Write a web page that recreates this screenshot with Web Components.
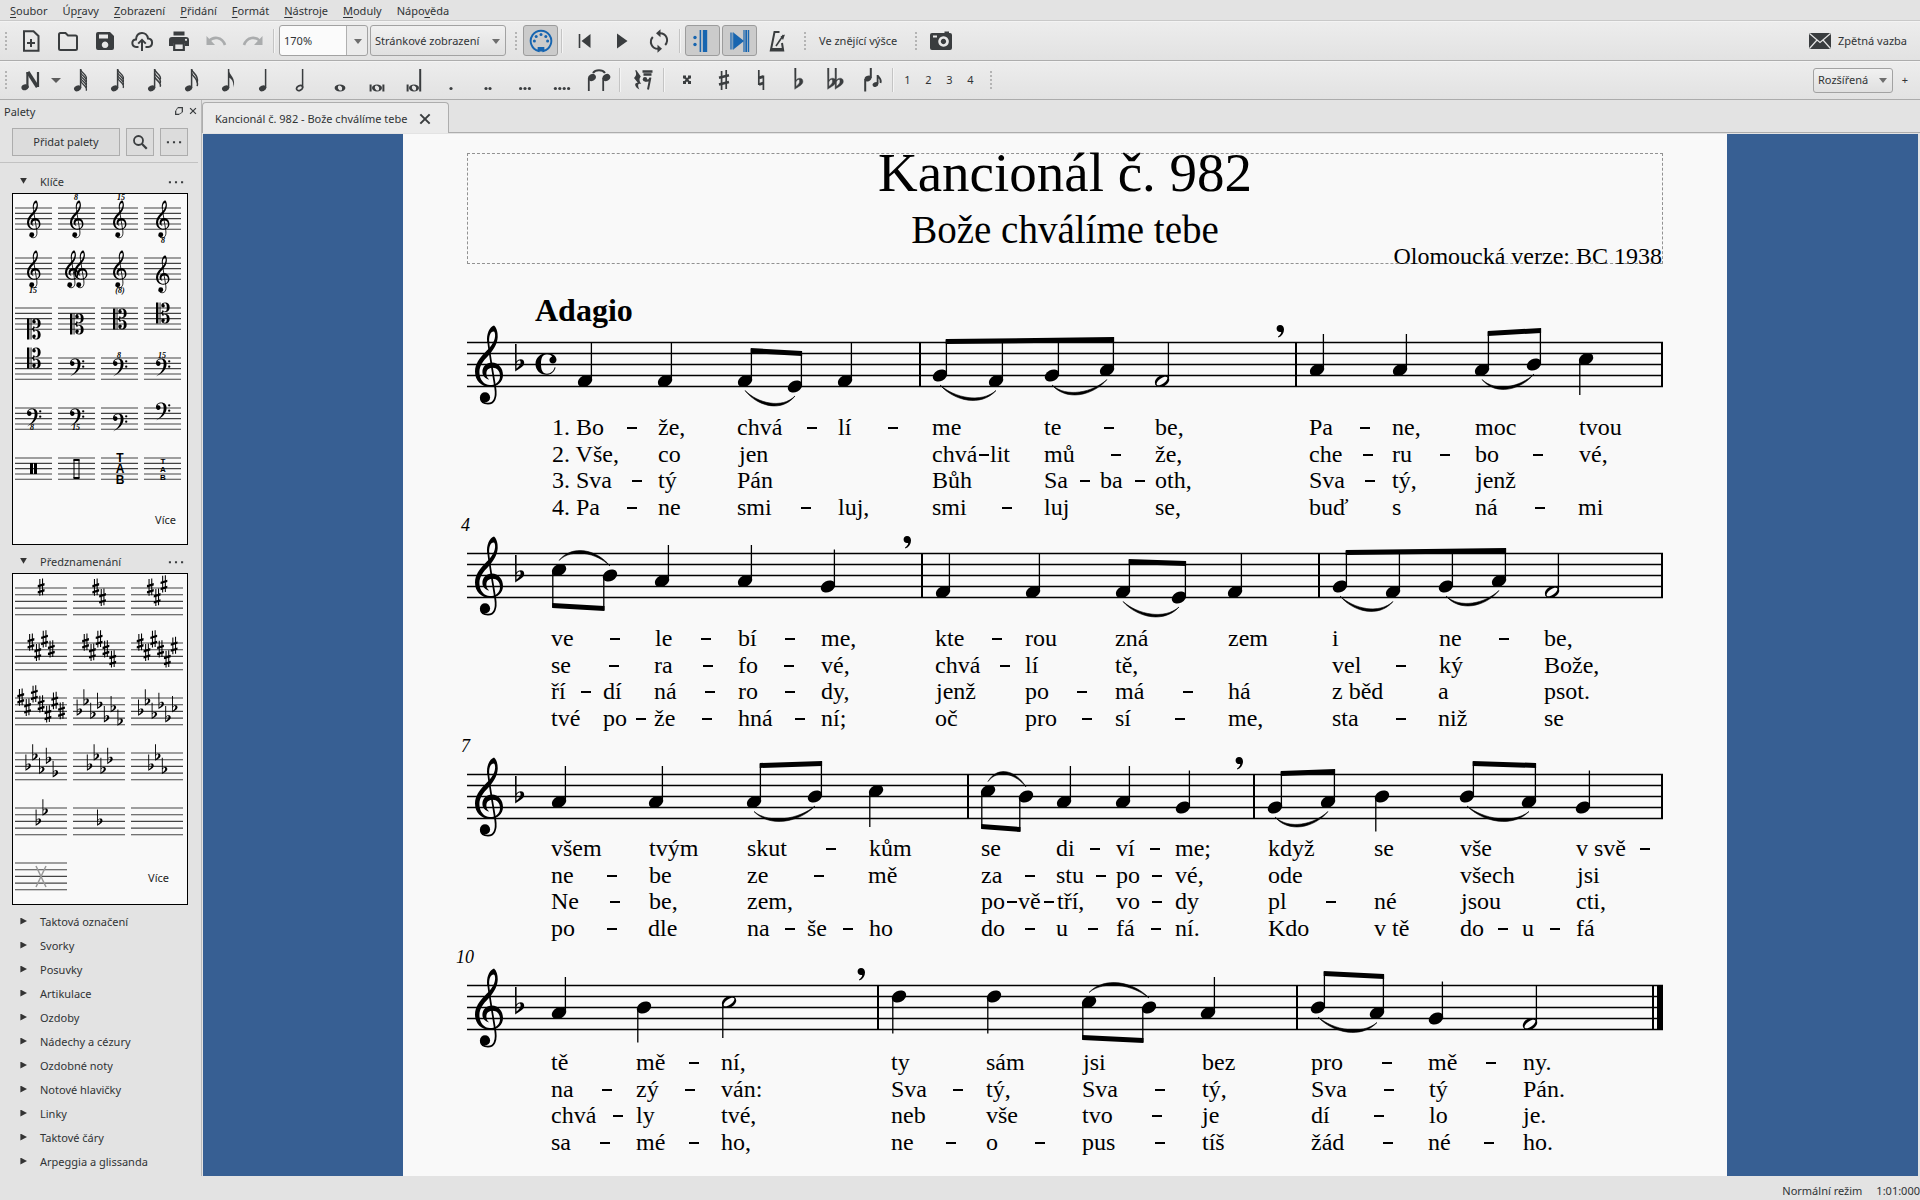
<!DOCTYPE html>
<html lang="cs">
<head>
<meta charset="utf-8">
<title>Kancionál č. 982 - Bože chválíme tebe</title>
<style>
html, body { height: 100%; }
body { margin: 0; background: #e3e3e3; color: #303335; font: 11px/16px "Noto Sans", "Open Sans", sans-serif; overflow: hidden; }
</style>
</head>
<body>
<score-app></score-app>
<script>
const INK = '#3a3d3f';

/* ---------- shared glyph shapes, 1 staff space = 11 units ---------- */
const G_CLEF = `<path d="M19,-49.5C22,-47 22.9,-42 22.7,-38C22.4,-31 18.5,-25 13.5,-19.5C8.5,-14.5 4.4,-9.5 4.4,-3C4.4,4.5 9,10.1 15,10.1C21,10.1 25,6.5 25,1C25,-4 22,-7.2 17.5,-7.2C13.8,-7.2 11.4,-5 11.4,-1.5C11.4,1 12.2,3 14.2,4.6C10,3.6 7.4,.5 7.4,-3C7.4,-8.5 11.5,-12.5 17,-12.5C23.2,-12.5 28,-7 28,0C28,7 22.5,11.8 15,11.8C6,11.8 0,5.5 0,-3.5C0,-11 4.5,-17 10,-22.5C15,-27.5 19.8,-33 20.1,-39C20.2,-42 19.6,-43.6 18.6,-43.6C15.5,-43.6 13.8,-39 14.2,-33L12.2,-33C11.2,-41 14.5,-48 19,-49.5Z"/><path d="M13.2,-34C14,-24 18,-2 20.3,13C21.8,23 19,28.6 13,28.6C9,28.6 6,27 5.8,23" fill="none" stroke="#000" stroke-width="1.8"/><circle cx="10" cy="22.4" r="5.1"/>`;
const FLAT = `<path fill-rule="evenodd" d="M0,-20H1.6V-2.6C3.4,-5.4 9.2,-6 9.2,-1.2C9.2,2.8 4,4.5 .2,7.5ZM1.5,-.6V4.4C4,2.4 5.6,1 5.6,-1.7C5.6,-4.6 2.6,-3.7 1.5,-.6Z"/>`;
const SHARP = `<path d="M-3,-15h1.9V15h-1.9ZM1.8,-16h1.9V14h-1.9ZM-5.8,-4.2L6.3,-7.8V-3.6L-5.8,0ZM-5.8,6.6L6.3,3V7.2L-5.8,10.8Z" transform="translate(0 -1)"/>`;
const F_CLEF = `<path d="M0,-2C0,-8 5,-11.5 11,-11.5C18,-11.5 22,-7 22,0C22,11 13,20 0,26C9,20 16,12 16,0C16,-6 14,-10 10.5,-10C7,-10 3.5,-8.5 3,-5.5C7,-7 9.5,-4 9.5,-1C9.5,2 7.3,4 4.7,4C1.8,4 0,1.8 0,-2Z"/><circle cx="27.5" cy="-5.5" r="2.4"/><circle cx="27.5" cy="5.5" r="2.4"/>`;
const C_CLEF = `<path d="M0,-22H5V22H0ZM7.5,-22H9.3V22H7.5ZM9.3,0C12,-1.5 13.5,-4 14,-7C15,-4.5 17,-3.5 19,-3.5C22,-3.5 22.5,-7 22.5,-12C22.5,-17.5 21.5,-20.3 18.5,-20.3C17,-20.3 15.8,-19.8 15.3,-19C17.5,-18.5 18.3,-17 18.3,-15.3C18.3,-13 16.7,-11.6 14.8,-11.6C12.6,-11.6 11,-13.2 11,-15.6C11,-19.5 14.5,-22 19,-22C25,-22 28.5,-18 28.5,-12C28.5,-6 25,-2 20,-2C18.5,-2 17,-2.4 16,-3C15.6,-1.7 15,-.8 14,0C15,.8 15.6,1.7 16,3C17,2.4 18.5,2 20,2C25,2 28.5,6 28.5,12C28.5,18 25,22 19,22C14.5,22 11,19.5 11,15.6C11,13.2 12.6,11.6 14.8,11.6C16.7,11.6 18.3,13 18.3,15.3C18.3,17 17.5,18.5 15.3,19C15.8,19.8 17,20.3 18.5,20.3C21.5,20.3 22.5,17.5 22.5,12C22.5,7 22,3.5 19,3.5C17,3.5 15,4.5 14,7C13.5,4 12,1.5 9.3,0Z"/>`;
const COMMON = `<path d="M9.6,3.5C8.5,8 5,10.8 .5,10.8C-6,10.8 -10.5,6 -10.5,0C-10.5,-6 -6,-10.8 1,-10.8C6.5,-10.8 10.5,-8 10.5,-4.3C10.5,-2 8.8,-.5 6.9,-.5C4.8,-.5 3.4,-2 3.4,-3.9C3.4,-6 5,-7.2 6.2,-7.6C5,-9 3,-9.7 1,-9.7C-3.4,-9.7 -5,-6 -5,0C-5,6 -3.4,9.7 1,9.7C5,9.7 7.8,7 8.6,3.3Z"/>`;
const BREATH = `<path d="M0,-4C2.6,-4 4,-2 4,.4C4,4 2,7 -1.6,8.4L-2,7.4C0,6.2 1.2,4.6 1.2,3C.8,3.1 .4,3.1 0,3.1C-2,3.1 -3.4,1.5 -3.4,-.5C-3.4,-2.5 -2,-4 0,-4Z"/>`;

/* ---------- toolbar icons, 24 x 24 ---------- */
const st = (d, w = 2, c = INK) => `<path d="${d}" fill="none" stroke="${c}" stroke-width="${w}"/>`;
const fl = (d, c = INK) => `<path d="${d}" fill="${c}"/>`;
const note = n => {
  let s = `<ellipse cx="8.6" cy="20.3" rx="3.7" ry="2.8" transform="rotate(-22 8.6 20.3)" fill="${INK}"/>` + st('M11.6,20V1', 1.5);
  for (let i = 0; i < n; i++) {
    const y = 1 + i * (n > 3 ? 2.8 : 3.6);
    s += n === 1 ? fl('M11.6,2C12.2,7 19.5,10 16.4,19.5C16.8,14 14.8,10.5 11.6,9.5Z') : st(`M11.6,${y + .5}c1,4 7.4,5.2 5.6,${n > 2 ? 10 : 13}`, n > 3 ? 1.3 : 1.5);
  }
  return s;
};
const dots = n => Array.from({ length: n }, (_, i) => `<circle cx="${12 + (i - (n - 1) / 2) * (n > 2 ? 4.4 : 4)}" cy="20.5" r="1.6" fill="${INK}"/>`).join('');
const whole = (x = 12, y = 20, r = 5) => `<path fill-rule="evenodd" fill="${INK}" d="M${x - r},${y}a${r},3.4 0 1,0 ${2 * r},0a${r},3.4 0 1,0 ${-2 * r},0ZM${x - 2},${y - 1.4}a1.9,2.4 -30 0,1 4,2.8a1.9,2.4 -30 0,1 -4,-2.8Z"/>`;
const BLUE = '#1765b0';
const ICONS = {
  new: st('M5,2.2H14.5L19.5,7V21.8H5Z') + st('M12,10v8M8,14h8'),
  open: st('M3,5.5Q3,4 4.5,4H9.5L12,6.5H19.5Q21,6.5 21,8V19.5Q21,21 19.5,21H4.5Q3,21 3,19.5Z'),
  save: `<path fill-rule="evenodd" fill="${INK}" d="M5,3H17L21,7V19Q21,21 19,21H5Q3,21 3,19V5Q3,3 5,3ZM6,5.5V9.5H15V5.5ZM12,12.5a3.3,3.3 0 1,0 .1,0Z"/>`,
  cloud: st('M8.5,18H6.2C1,17.5 1.2,10.5 6,10.4C6.6,2 17,2 18,9.6C23.6,10 23.2,17.6 18.2,18H15.5') + st('M12,22V11M8.2,14.6L12,10.8L15.8,14.6'),
  print: fl('M6.5,2.5H17.5V6.5H6.5ZM5,8H19Q22,8 22,11V17H18V14H6V17H2V11Q2,8 5,8Z') + st('M7.2,14.5H16.8V21H7.2Z', 2.2) + '<circle cx="19" cy="10.8" r="1.1" fill="#eee"/>',
  undo: st('M5,12C9,7.5 18,7 21,16', 2.6, '#aaacad') + fl('M2.5,7V16H11Z', '#aaacad'),
  redo: st('M19,12C15,7.5 6,7 3,16', 2.6, '#aaacad') + fl('M21.5,7V16H13Z', '#aaacad'),
  midi: `<path d="M9.6,22A10.3,10.3 0 1 1 14.4,22V19H9.6Z" fill="none" stroke="${BLUE}" stroke-width="1.9"/><rect x="9.600" y="18" width="4.800" height="4.500" fill="${BLUE}"/>` + [[5.4, 12], [7.2, 7.6], [12, 5.6], [16.8, 7.6], [18.6, 12]].map(p => `<circle cx="${p[0]}" cy="${p[1]}" r="1.5" fill="${BLUE}"/>`).join(''),
  rewind: st('M6.5,5V19', 1.6) + fl('M17.5,5V19L8.5,12Z'),
  play: fl('M7,4.5V19.5L17.5,12Z'),
  loop: st('M13,4.2C19.5,4.4 22.2,11.5 18.2,16M11,19.8C4.5,19.6 1.8,12.5 5.8,8', 2) + fl('M13.5,.2V8.2L9,4.2ZM10.5,23.8V15.8L15,19.8Z'),
  repeat: `<circle cx="4" cy="8.5" r="1.7" fill="${BLUE}"/><circle cx="4" cy="15.5" r="1.7" fill="${BLUE}"/>` + st('M9.4,1V23', 1.6, BLUE) + st('M14,1V23', 4.4, BLUE),
  pan: fl('M6,4V20L16,12Z', BLUE) + st('M3,3.5V20.5M5.2,3.5V20.5', 1.3, BLUE) + st('M16,1V23M20.6,1V23', 1.2, BLUE) + st('M18.3,1V23', 2, BLUE),
  metronome: st('M14.5,3H9.5L5.8,21.5H18.2L17,14', 2) + st('M11,17L18.5,6', 1.6) + fl('M15.5,7.5L20,5.5L18,11Z') + st('M6,20.5H18', 3),
  camera: `<path fill-rule="evenodd" fill="${INK}" d="M3,4H15.5V2.5H20V4H21Q23,4 23,6V19Q23,21 21,21H3Q1,21 1,19V6Q1,4 3,4ZM4,6.5V8.5H8V6.5ZM14.5,7.2a5.3,5.3 0 1,0 .1,0ZM14.5,9.8a2.7,2.7 0 1,1 -.1,0Z"/>`,
  search: `<circle cx="10" cy="10" r="6" fill="none" stroke="${INK}" stroke-width="2.4"/>` + st('M14.4,14.4L21,21', 3),
  more: `<path d="M2.500,11h2.8v2.8h-2.8ZM10.600,11h2.8v2.8h-2.8ZM18.700,11h2.8v2.8h-2.8Z" fill="${INK}"/>`,
  mail: `<rect x="1" y="4" width="22" height="16" rx="1.4" fill="${INK}"/>` + st('M1.5,4.5L12,13.5L22.5,4.5M1.5,19.5L9,11M22.5,19.5L15,11', 1.2, '#e6e6e6'),
  input: fl('M6.6,22.2a3.8,2.9 -20 1,1 3.2,-3.2Q9,22 6.6,22.2Z') + st('M8.4,20V4M19,4V19', 2.2) + st('M8.8,4L18.5,19', 3.6),
  n64: note(5), n32: note(4), n16: note(3), n8b: note(2), n8: note(1), n4: note(0),
  n2: `<ellipse cx="8.6" cy="20" rx="3.2" ry="2.2" transform="rotate(-30 8.6 20)" fill="none" stroke="${INK}" stroke-width="1.7"/>` + st('M11.6,19.5V1', 1.5),
  n1: whole(12, 20, 5.4),
  breve: whole(12, 20, 5) + st('M5.6,16.5V23.5M18.4,16.5V23.5', 2),
  longa: whole(12, 20, 5) + st('M5.6,16.5V23.5', 2) + st('M18.2,23.5V1', 2),
  d1: dots(1), d2: dots(2), d3: dots(3), d4: dots(4),
  tie: st('M6,5C8.5,1.2 15.5,1.2 18,5', 2) + `<ellipse cx="5" cy="9.500" rx="4" ry="3.300" transform="rotate(-28 5 9.500)" fill="${INK}"/><ellipse cx="19.400" cy="9.500" rx="4" ry="3.300" transform="rotate(-28 19.400 9.500)" fill="${INK}"/>` + st('M1.8,10V23M16.2,10V23', 1.8),
  rest: fl('M5.2,2L9.8,8.5C7.8,11 8.2,13 10.2,16C7,15 6.2,17 8.4,21.5C3.4,19 2.8,14.5 6.8,14.8L3,10C5.8,7.5 5.4,5.5 4.2,2.6Z') + st('M11.5,3.5H21.5M12.5,6.5H20.5', 2.4) + `<circle cx="14" cy="11.2" r="2.2" fill="${INK}"/>` + st('M14,12.5Q18.5,13.5 19.4,9.6L17,21.5', 2),
  dsharp: st('M9,8.5L15,15M15,8.5L9,15', 2) + fl('M8,7.5h3v3h-3ZM13,7.5h3v3h-3ZM8,13h3v3h-3ZM13,13h3v3h-3Z'),
  sharp: st('M9.6,3V22M14.2,2V21', 1.7) + st('M7,9.8L17,7.2M7,16.6L17,14', 2.6),
  natural: st('M9.8,2V17M14.4,7.500V22', 1.7) + st('M10,9.8L14.2,8.6M10,16.500L14.2,15.200', 2.8),
  flat: `<g fill="${INK}" stroke="${INK}" stroke-width=".500" transform="translate(8.6 14.500) scale(.9)">${FLAT}</g>`,
  dflat: `<g fill="${INK}" stroke="${INK}" stroke-width=".500"><g transform="translate(4.500 14.500) scale(.9)">${FLAT}</g><g transform="translate(12 14.500) scale(.9)">${FLAT}</g></g>`,
  flip: `<ellipse cx="8" cy="10.5" rx="3.5" ry="2.7" transform="rotate(-28 8 10.5)" fill="${INK}"/><ellipse cx="15.4" cy="16.5" rx="2.9" ry="2.3" transform="rotate(-28 15.4 16.5)" fill="${INK}"/>` + st('M5.2,11V23.5M10.8,10V0', 2) + st('M17.6,16V7M17.6,7.5C18.6,9.5 22,11 20.5,15', 1.8),
  close: st('M5,5L19,19M19,5L5,19', 3),
  dock: st('M4,12V20H12M9,4H20V15', 3) + st('M4,12L9,4M12,20L20,15', 2)
};

const define = (name, css, html, ready) => {
  const tpl = document.createElement('template');
  tpl.innerHTML = `<style>*{box-sizing:border-box}button,select,input{font:inherit;color:inherit;margin:0}${css}</style>${html}`;
  customElements.define(name, class extends HTMLElement {
    connectedCallback() {
      if (this.shadowRoot) return;
      this.attachShadow({ mode: 'open' }).append(tpl.content.cloneNode(true));
      if (ready) ready(this, this.shadowRoot);
    }
  });
};

define('mu-icon', ':host{display:block;width:24px;height:24px}svg{display:block;width:100%;height:100%}', '<svg viewBox="0 0 24 24" aria-hidden="true"></svg>',
  (el, root) => { root.querySelector('svg').innerHTML = ICONS[el.getAttribute('name')] || ''; });

define('tool-button', `
:host{display:block;width:37px;height:31px;padding:0 1px}
button{display:grid;place-items:center;width:100%;height:100%;padding:0;border:1px solid transparent;border-radius:3px;background:none}
:host([on]) button{background:#cbcbcb;border-color:#9c9c9c}
:host([narrow]){width:21px}`, '<button type="button"><slot></slot></button>',
  (el, root) => {
    const b = root.querySelector('button'), n = el.getAttribute('icon');
    if (el.hasAttribute('label')) b.setAttribute('aria-label', el.getAttribute('label'));
    if (el.hasAttribute('on')) b.setAttribute('aria-pressed', 'true');
    if (n) b.innerHTML = `<mu-icon name="${n}"></mu-icon>`;
  });

define('tool-grip', ':host{display:block;width:4px;height:20px;background:radial-gradient(circle,#b4b4b4 0 1px,transparent 1px) 0 0/4px 4px;margin:0 4px}:host([wide]){margin-left:8px}', '');
define('tool-sep', ':host{display:block;width:2px;height:24px;border-left:1px solid #c4c4c4;border-right:1px solid #f4f4f4;margin:0 3px 0 2px}', '');

define('combo-box', `
:host{display:block;position:relative;height:31px}
select{appearance:none;width:100%;height:100%;padding:0 22px 0 4px;border:1px solid #a2a2a2;border-radius:3px;background:linear-gradient(#f1f1f1,#e0e0e0);line-height:16px}
:host([split]) select{background:linear-gradient(90deg,#fbfbfb calc(100% - 21px),#b0b0b0 calc(100% - 21px) calc(100% - 20px),#ebebeb calc(100% - 20px))}
i{position:absolute;right:6px;top:50%;margin-top:-2px;border:4px solid transparent;border-top:5px solid #6e6e6e;border-bottom:0;pointer-events:none}`,
  '<select><option></option></select><i></i>',
  (el, root) => {
    root.querySelector('option').textContent = el.getAttribute('value');
    root.querySelector('select').setAttribute('aria-label', el.getAttribute('label'));
  });

define('menu-bar', `
:host{display:flex;height:20px;padding:2px 0 0 2px;align-items:center}
button{border:0;background:none;padding:0 7px 0 8px;height:18px;line-height:18px}
u{text-underline-offset:2px}`,
  ['<u>S</u>oubor', 'Úp<u>r</u>avy', '<u>Z</u>obrazení', '<u>P</u>řidání', '<u>F</u>ormát', '<u>N</u>ástroje', '<u>M</u>oduly', 'Nápo<u>v</u>ěda'].map(t => `<button type="button">${t}</button>`).join(''));

define('tool-bar', `
:host{display:flex;align-items:center;background:linear-gradient(#ededed,#e2e2e2);border-top:1px solid #c9c9c9;box-shadow:inset 0 1px #f3f3f3;height:40px}
:host([second]){border-color:#adadad;border-bottom:1px solid #ababab}`, '<slot></slot>');

define('palette-head', `
:host{display:block;height:24px}
div{display:flex;align-items:center;height:24px;padding:1px 16px 0 20px}
button{display:flex;align-items:center;gap:13px;border:0;background:none;padding:0;flex:1;line-height:23px}
i{width:7px;height:7px;background:#333;margin-top:-1px}
i.r{clip-path:polygon(5% 0,100% 50%,5% 100%)} i.o{clip-path:polygon(0 5%,100% 5%,50% 90%)}
.m{flex:none;width:18px}
.m mu-icon{width:18px;height:18px}`,
  '<div><button type="button" class="t"><i class="r"></i><span><slot></slot></span></button></div>',
  (el, root) => {
    if (el.hasAttribute('open')) {
      root.querySelector('i').className = 'o';
      root.querySelector('div').insertAdjacentHTML('beforeend', '<button type="button" class="m" aria-label="Nabídka palety"><mu-icon name="more"></mu-icon></button>');
    }
  });

const staff = (w, y, gap) => Array.from({ length: 5 }, (_, i) => `<path d="M0,${y + i * gap}H${w}" stroke="#444" stroke-width="1.100"/>`).join('');
const small = (t, x, y) => `<text x="${x}" y="${y}" font-family="Liberation Serif,serif" font-style="italic" font-weight="bold" font-size="8" text-anchor="middle">${t}</text>`;
const put = (g, x, y, s = .48) => `<g transform="translate(${x} ${y}) scale(${s})">${g}</g>`;
const tab = (x, ys, sz) => ['T', 'A', 'B'].map((c, i) => `<text x="${x}" y="${ys[i]}" font-family="Liberation Sans,sans-serif" font-weight="bold" font-size="${sz}" text-anchor="middle">${c}</text>`).join('');
/* rows are 50px high, staff lines at 14, 19, 25, 30, 35 */
const CLEFS = [
  put(G_CLEF, 12, 30), put(G_CLEF, 12, 30) + small('8', 18, 6), put(G_CLEF, 12, 30) + small('15', 20, 6), put(G_CLEF, 12, 30) + small('8', 19, 49),
  put(G_CLEF, 12, 30) + small('15', 18, 49), put(G_CLEF, 7, 30) + put(G_CLEF, 16, 30), put(G_CLEF, 12, 30) + small('(8)', 19, 49), put(G_CLEF, 12, 35),
  put(C_CLEF, 12, 35), put(C_CLEF, 12, 30), put(C_CLEF, 12, 25), put(C_CLEF, 12, 19),
  put(C_CLEF, 12, 14), put(F_CLEF, 12, 20), put(F_CLEF, 12, 20) + small('8', 18, 14), put(F_CLEF, 12, 20) + small('15', 18, 14),
  put(F_CLEF, 12, 20) + small('8', 17, 36), put(F_CLEF, 12, 20) + small('15', 18, 36), put(F_CLEF, 12, 25), put(F_CLEF, 12, 14),
  '<path d="M15,19h3v11h-3ZM19,19h3v11h-3Z"/>', '<path d="M16,15.500h5v18.500h-5Z" fill="none" stroke="#000"/><path d="M15.500,15h6v2h-6ZM15.500,33h6v2h-6Z"/>',
  tab(19, [18, 29, 40], 12), tab(19, [20, 28, 36], 8)
].map(g => `<svg viewBox="0 0 37 50">${staff(37, 14, 5.33)}${g}</svg>`);

const SH = [0, 3, -1, 2, 5, 1, 4], FB = [4, 1, 5, 2, 6, 3, 7];
const keysig = k => {
  const n = Math.abs(k), order = k > 0 ? SH : FB;
  let s = '';
  for (let i = 0; i < n; i++) {
    const x = 26 + (i - (n - 1) / 2) * 6.8, y = 14 + order[i] * 3.35;
    s += k > 0 ? put(SHARP, x, y, .56) : put(FLAT, x - 2, y, .6);
  }
  return s;
};
const KEYS = [1, 2, 3, 4, 5, 6, 7, -7, -6, -5, -4, -3, -2, -1, 0].map(keysig).concat('<path d="M21,17L31,38M31,17L21,38" stroke="#999" stroke-width="1.500"/>')
  .map(g => `<svg viewBox="0 0 52 55">${staff(52, 14, 6.7)}${g}</svg>`);

define('palette-grid', `
:host{display:block;margin:0 13px 4px 12px;border:1px solid #000;background:#f9f9f9}
div{display:grid;padding:0 0 0 2px;column-gap:6px}
div.clefs{grid-template-columns:repeat(4,37px);grid-auto-rows:50px}
div.keys{grid-template-columns:repeat(3,52px);grid-auto-rows:55px}
svg{display:block;width:100%;height:100%;overflow:visible}
button{border:0;background:none;padding:2px 5px 0 0;text-align:right;grid-column:-2;color:#222}
.keys button{padding-right:14px}`, '<div></div>',
  (el, root) => {
    const kind = el.getAttribute('kind'), d = root.querySelector('div');
    d.className = kind;
    d.innerHTML = (kind === 'clefs' ? CLEFS : KEYS).join('') + '<button type="button">Více</button>';
  });

define('palette-panel', `
:host{display:block;width:202px;border-right:1px solid #b9b9b9;overflow:hidden}
header{display:flex;align-items:center;height:24px;padding:0 2px 0 4px;gap:3px}
header span{flex:1}
header button{border:0;background:none;padding:0;width:11px}
header mu-icon{width:10px;height:10px;margin-top:-3px}
.row{display:flex;gap:6px;height:39px;padding:4px 10px 6px 12px;margin:0 3px 6px 0;border-bottom:1px solid #c2c2c2}
.row button{display:grid;place-items:center;height:28px;width:28px;padding:0;border:1px solid #adadad;background:#dcdcdc}
.row button.a{flex:1}
.row mu-icon{width:18px;height:18px}`,
  `<header><span>Palety</span><button type="button" aria-label="Odpojit"><mu-icon name="dock"></mu-icon></button><button type="button" aria-label="Zavřít"><mu-icon name="close"></mu-icon></button></header>
<div class="row"><button type="button" class="a">Přidat palety</button><button type="button" aria-label="Hledat"><mu-icon name="search"></mu-icon></button><button type="button" aria-label="Další"><mu-icon name="more"></mu-icon></button></div>
<palette-head open>Klíče</palette-head><palette-grid kind="clefs"></palette-grid>
<palette-head open>Předznamenání</palette-head><palette-grid kind="keys"></palette-grid>
${['Taktová označení', 'Svorky', 'Posuvky', 'Artikulace', 'Ozdoby', 'Nádechy a cézury', 'Ozdobné noty', 'Notové hlavičky', 'Linky', 'Taktové čáry', 'Arpeggia a glissanda'].map(t => `<palette-head>${t}</palette-head>`).join('')}`);

/* ---------- the score ----------
   Horizontal positions are page units with the sheet's left edge at 403.
   notes: [x, step above the bottom line, kind]; kinds: u/d stem direction, h half note.
   beams: [first note, last note, left edge y, right edge y] relative to the top line.
   slurs: [first note, last note, -1 above / 1 below].
   lyrics: "x text" entries; a lone hyphen is a syllable dash centred on x. */
const SYSTEMS = [
  { h: 256, t: 78, num: '', off: 49,
    notes: '578 1 u,658 1 u,738 1 u,788 0 u,838 1 u,933 2 u,989 1 u,1045 2 u,1100 3 u,1155 1 uh,1310 3 u,1393 3 u,1475 3 u,1527 4 u,1579 5 d',
    beams: [[2, 3, 6, 9], [5, 8, -3, -5], [12, 13, -11, -14]], slurs: [[2, 3, 1], [5, 6, 1], [7, 8, 1], [12, 13, 1]],
    bars: [920, 1296], breath: 1280,
    lyrics: ['552 1. Bo|632 -|658 že,|737 chvá|812 -|838 lí|893 -|932 me|1044 te|1109 -|1155 be,|1309 Pa|1365 -|1392 ne,|1475 moc|1579 tvou',
      '552 2. Vše,|658 co|739 jen|932 chvá|984 -|990 lit|1044 mů|1116 -|1155 že,|1309 che|1368 -|1392 ru|1445 -|1475 bo|1538 -|1579 vé,',
      '552 3. Sva|637 -|658 tý|737 Pán|932 Bůh|1044 Sa|1085 -|1100 ba|1140 -|1155 oth,|1309 Sva|1370 -|1392 tý,|1476 jenž',
      '552 4. Pa|632 -|658 ne|737 smi|806 -|838 luj,|932 smi|1007 -|1044 luj|1155 se,|1309 buď|1392 s|1475 ná|1540 -|1578 mi'] },
  { h: 221, t: 33, num: '4', off: 49,
    notes: '552 5 d,603 4 d,655 3 u,738 3 u,821 2 u,936 1 u,1026 1 u,1116 1 u,1172 0 u,1228 1 u,1333 2 u,1386 1 u,1439 2 u,1492 3 u,1545 1 uh',
    beams: [[0, 1, 55, 58], [7, 8, 6, 8], [10, 13, -3, -5]], slurs: [[0, 1, -1], [7, 8, 1], [10, 11, 1], [12, 13, 1]],
    bars: [922, 1319], breath: 907,
    lyrics: ['551 ve|615 -|655 le|706 -|738 bí|790 -|821 me,|935 kte|997 -|1025 rou|1115 zná|1228 zem|1332 i|1439 ne|1504 -|1544 be,',
      '551 se|614 -|654 ra|708 -|738 fo|789 -|821 vé,|935 chvá|1005 -|1025 lí|1115 tě,|1332 vel|1401 -|1439 ký|1544 Bože,',
      '551 ří|586 -|603 dí|654 ná|710 -|738 ro|790 -|821 dy,|936 jenž|1025 po|1082 -|1115 má|1188 -|1228 há|1332 z běd|1438 a|1544 psot.',
      '551 tvé|603 po|641 -|654 že|707 -|738 hná|800 -|821 ní;|935 oč|1025 pro|1087 -|1115 sí|1180 -|1228 me,|1332 sta|1401 -|1438 niž|1544 se'] },
  { h: 211, t: 33, num: '7', off: 38,
    notes: '552 3 u,649 3 u,747 3 u,808 4 u,869 5 d,981 5 d,1019 4 d,1057 3 u,1116 3 u,1176 2 u,1268 2 u,1321 3 u,1375 4 d,1460 4 u,1522 3 u,1576 2 u',
    beams: [[2, 3, -11, -13], [5, 6, 55, 58], [10, 11, -3, -5], [13, 14, -13, -11]], slurs: [[2, 3, 1], [5, 6, -1], [10, 11, 1], [13, 14, 1]],
    bars: [968, 1254], breath: 1239,
    lyrics: ['551 všem|649 tvým|747 skut|831 -|869 kům|981 se|1056 di|1095 -|1116 ví|1155 -|1175 me;|1268 když|1374 se|1460 vše|1576 v svě|1645 -',
      '551 ne|612 -|649 be|747 ze|819 -|868 mě|981 za|1030 -|1056 stu|1101 -|1116 po|1157 -|1175 vé,|1268 ode|1460 všech|1577 jsi',
      '551 Ne|615 -|649 be,|747 zem,|981 po|1012 -|1018 vě|1049 -|1057 tří,|1116 vo|1157 -|1175 dy|1268 pl|1331 -|1374 né|1461 jsou|1576 cti,',
      '551 po|612 -|648 dle|747 na|790 -|807 še|848 -|869 ho|981 do|1030 -|1056 u|1093 -|1116 fá|1156 -|1175 ní.|1268 Kdo|1374 v tě|1460 do|1503 -|1522 u|1555 -|1576 fá'] },
  { h: 224, t: 33, num: '10', off: 41, final: true,
    notes: '552 3 u,637 4 d,722 5 dh,892 6 d,987 6 d,1082 5 d,1142 4 d,1201 3 u,1311 4 u,1370 3 u,1429 2 u,1523 1 uh',
    beams: [[5, 6, 55, 58], [8, 9, -14, -11]], slurs: [[5, 6, -1], [8, 9, 1]],
    bars: [878, 1297], breath: 861,
    lyrics: ['551 tě|636 mě|694 -|721 ní,|891 ty|986 sám|1083 jsi|1202 bez|1311 pro|1387 -|1428 mě|1491 -|1523 ny.',
      '551 na|607 -|636 zý|690 -|721 ván:|891 Sva|958 -|986 tý,|1082 Sva|1160 -|1202 tý,|1311 Sva|1389 -|1429 tý|1523 Pán.',
      '551 chvá|618 -|636 ly|721 tvé,|891 neb|986 vše|1082 tvo|1157 -|1202 je|1311 dí|1379 -|1429 lo|1523 je.',
      '551 sa|605 -|636 mé|694 -|721 ho,|891 ne|951 -|986 o|1040 -|1082 pus|1160 -|1202 tíš|1311 žád|1388 -|1428 né|1489 -|1523 ho.'] }
];
const STEM = [39, 39, 37, 36, 35, 36, 37];

const drawSystem = s => {
  const t = s.t, b = t + 44;
  let o = '';
  for (let i = 0; i < 5; i++) o += `<path d="M467,${t + i * 11 + .5}H1663" stroke="#000" stroke-width="1.300"/>`;
  o += put(G_CLEF, 475, b - 11, 1) + put(FLAT, 515, t + 22, 1);
  if (!s.num) o += put(COMMON, 546, t + 22, 1) + `<text class="tempo" x="535" y="${t - 21}">Adagio</text>`;
  else o += `<text class="num" x="${s.num.length > 1 ? 456 : 461}" y="${t - 22}">${s.num}</text>`;
  const line = (x, w) => `<rect x="${x}" y="${t}" width="${w}" height="45"/>`;
  s.bars.forEach(x => { o += line(x - 1, 2); });
  o += s.final ? line(1652, 2) + line(1657, 6) : line(1661, 2);
  o += put(BREATH, s.breath, t - 13, 1);
  const notes = s.notes.split(',').map(v => { const p = v.split(' '); const st = +p[1]; return { x: +p[0], st, y: b - st * 5.5 + .5, up: p[2][0] === 'u', half: p[2][1] === 'h' }; });
  const sx = n => n.up ? n.x + 13.4 : n.x + .8;
  notes.forEach(n => { n.end = n.up ? n.y - STEM[n.st] : n.y + STEM[n.st]; });
  s.beams.forEach(([i, j, y1, y2]) => {
    const a = sx(notes[i]), z = sx(notes[j]);
    for (let k = i; k <= j; k++) notes[k].end = t + y1 + (y2 - y1) * (sx(notes[k]) - a) / (z - a) + (notes[k].up ? 1 : -1);
    const e = notes[i].up ? 5 : -5;
    o += `<path d="M${a - .7},${t + y1}L${z + .7},${t + y2}V${t + y2 + e}L${a - .7},${t + y1 + e}Z"/>`;
  });
  notes.forEach(n => {
    const cx = n.x + 7;
    o += `<path d="M${sx(n)},${n.y + (n.up ? -2 : 2)}V${n.end}" stroke="#000" stroke-width="1.300"/>`;
    o += `<ellipse cx="${cx}" cy="${n.y}" rx="7.600" ry="5.500" transform="rotate(-27 ${cx} ${n.y})"/>`;
    if (n.half) o += `<ellipse cx="${cx}" cy="${n.y}" rx="6.400" ry="2.700" fill="#f9f9f9" transform="rotate(-36 ${cx} ${n.y})"/>`;
  });
  s.slurs.forEach(([i, j, d]) => {
    const a = notes[i], z = notes[j], x1 = a.x + 7, x2 = z.x + 7, y1 = a.y + d * 9.5, y2 = z.y + d * 9.5, q = (x2 - x1) * .26;
    o += `<path d="M${x1},${y1}C${x1 + q},${y1 + d * 13} ${x2 - q},${y2 + d * 13} ${x2},${y2}C${x2 - q},${y2 + d * 16.5} ${x1 + q},${y1 + d * 16.5} ${x1},${y1}Z" stroke="#000" stroke-width=".6"/>`;
  });
  s.lyrics.forEach((l, r) => {
    const y = b + s.off + Math.round(r * 26.7);
    l.split('|').forEach(w => {
      const i = w.indexOf(' '), x = +w.slice(0, i), txt = w.slice(i + 1);
      o += txt === '-' ? `<rect x="${x - 5}" y="${y - 8}" width="10" height="2"/>` : `<text x="${x}" y="${y}">${txt}</text>`;
    });
  });
  return `<svg viewBox="403 0 1324 ${s.h}">${o}</svg>`;
};

define('score-system', `
:host{display:block}
svg{display:block;width:100%;overflow:visible}
text{font:24px "Liberation Serif",serif}
.tempo{font-size:32px;font-weight:bold}
.num{font-size:18px;font-style:italic}`, '', (el, root) => {
  root.append(document.createRange().createContextualFragment(drawSystem(SYSTEMS[+el.getAttribute('index')])));
});

define('score-sheet', `
:host{display:block;background:#f9f9f9;color:#000;font-family:"Liberation Serif",serif;overflow:hidden}
header{margin:19px 64px 0;height:111px;border:1px dashed #929292;white-space:nowrap}
h1,h2,p{margin:0;font-weight:normal;text-align:center}
h1{font-size:55px;line-height:38px}
h2{font-size:39px;line-height:40px;margin-top:18px}
p{font-size:24px;line-height:13px;text-align:right}`,
  `<header><h1>Kancionál č. 982</h1><h2>Bože chválíme tebe</h2><p>Olomoucká verze: BC 1938</p></header>${SYSTEMS.map((_, i) => `<score-system index="${i}"></score-system>`).join('')}`);

define('score-view', `
:host{display:flex;flex-direction:column;min-width:0}
.tabs{display:flex;align-items:flex-end;height:33px;border-bottom:1px solid #adadad;background:#e3e3e3}
.tab{display:flex;align-items:center;gap:10px;height:31px;margin-bottom:-1px;padding:2px 15px 0 12px;border:1px solid #adadad;border-bottom:0;border-radius:4px 4px 0 0;background:#ebebeb}
.tab span{white-space:nowrap}
.tab button{border:0;background:none;padding:0;width:16px}
.tab mu-icon{width:16px;height:16px}
main{flex:1;min-height:0;margin:1px 2px 0 1px;padding:0 191px 0 200px;background:#375f93;display:flex;overflow:hidden}
score-sheet{flex:1;min-width:0}`,
  `<div class="tabs"><div class="tab"><span>Kancionál č. 982 - Bože chválíme tebe</span><button type="button" aria-label="Zavřít kartu"><mu-icon name="close"></mu-icon></button></div></div><main><score-sheet></score-sheet></main>`);

const btn = (icon, label, extra = '') => `<tool-button icon="${icon}" label="${label}" ${extra}></tool-button>`;
define('score-app', `
:host{display:flex;flex-direction:column;height:100vh}
.body{flex:1;display:flex;min-height:0}
score-view{flex:1}
.gap{flex:1}
.arrow{width:13px;height:31px;padding:0;border:0;background:none;display:grid;place-items:center}
.arrow i{border:5px solid transparent;border-top-color:#5c5c5c;border-bottom:0}
.zoom{width:89px;margin:0 2px 0 1px}.mode{width:136px}.ws{width:80px;height:25px}
.pitch,.fb{border:0;background:none;padding:0;line-height:31px;white-space:nowrap}
.pitch{margin:0 13px 0 8px}
.fb{display:flex;align-items:center;gap:6px;margin-right:13px}
footer{display:flex;justify-content:flex-end;align-items:center;gap:14px;height:24px;padding-top:5px;white-space:nowrap}
.plus{border:0;background:none;padding:0;width:24px;margin-right:3px}`,
  `<menu-bar></menu-bar>
<tool-bar>
<tool-grip></tool-grip>${btn('new', 'Nový')}${btn('open', 'Otevřít')}${btn('save', 'Uložit')}${btn('cloud', 'Uložit online')}${btn('print', 'Tisk')}${btn('undo', 'Zpět')}${btn('redo', 'Znovu')}
<tool-sep></tool-sep><combo-box class="zoom" split value="170%" label="Zvětšení"></combo-box><combo-box class="mode" value="Stránkové zobrazení" label="Režim zobrazení"></combo-box>
<tool-grip wide></tool-grip>${btn('midi', 'MIDI vstup', 'on')}<tool-sep></tool-sep>${btn('rewind', 'Na začátek')}${btn('play', 'Přehrát')}${btn('loop', 'Smyčka')}
<tool-sep></tool-sep>${btn('repeat', 'Repetice', 'on')}${btn('pan', 'Sledovat přehrávání', 'on')}${btn('metronome', 'Metronom')}
<tool-grip wide></tool-grip><button type="button" class="pitch">Ve znějící výšce</button><tool-grip></tool-grip>${btn('camera', 'Snímek')}
<span class="gap"></span><button type="button" class="fb"><mu-icon name="mail"></mu-icon>Zpětná vazba</button>
</tool-bar>
<tool-bar second>
<tool-grip></tool-grip>${btn('input', 'Zadávání not')}<button type="button" class="arrow" aria-label="Režimy zadávání"><i></i></button>
${[['n64', '64'], ['n32', '32'], ['n16', '16'], ['n8b', '16'], ['n8', '8'], ['n4', '4'], ['n2', '2'], ['n1', '1'], ['breve', 'Brevis'], ['longa', 'Longa'], ['d1', 'Tečka'], ['d2', 'Dvě tečky'], ['d3', 'Tři tečky'], ['d4', 'Čtyři tečky'], ['tie', 'Ligatura']].map(a => btn(...a)).join('')}
<tool-sep></tool-sep>${btn('rest', 'Pomlka')}<tool-sep></tool-sep>
${[['dsharp', 'Dvojitý křížek'], ['sharp', 'Křížek'], ['natural', 'Odrážka'], ['flat', 'Béčko'], ['dflat', 'Dvojité béčko'], ['flip', 'Obrátit']].map(a => btn(...a)).join('')}
<tool-sep></tool-sep>${[1, 2, 3, 4].map(n => `<tool-button narrow>${n}</tool-button>`).join('')}<tool-grip wide></tool-grip>
<span class="gap"></span><combo-box class="ws" value="Rozšířená" label="Pracovní prostor"></combo-box><button type="button" class="plus">+</button>
</tool-bar>
<div class="body"><palette-panel></palette-panel><score-view></score-view></div>
<footer><span>Normální režim</span><span>1:01:000</span></footer>`);
</script>
</body>
</html>
